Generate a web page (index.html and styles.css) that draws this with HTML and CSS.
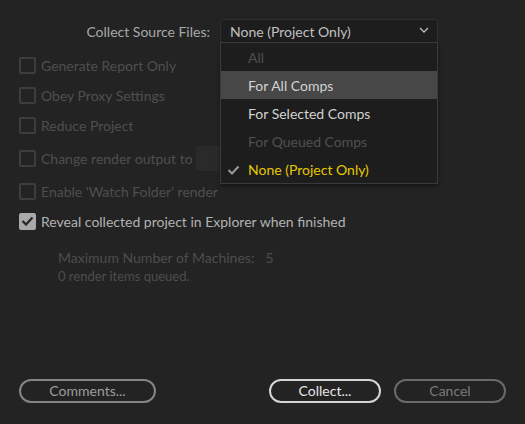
FILE: index.html
```html
<!DOCTYPE html>
<html>
<head>
<meta charset="utf-8">
<link rel="stylesheet" href="styles.css">
</head>
<body>
<div class="dialog">
  <div class="top-row">
    <span class="top-label">Collect Source Files:</span>
    <div class="select">
      <span class="select-value">None (Project Only)</span>
      <svg class="chevron" width="10" height="6" viewBox="0 0 10 6"><path d="M1 1 L5 5 L9 1" fill="none" stroke="#bdbdbd" stroke-width="1.3"/></svg>
      <ul class="menu">
        <li class="item disabled">All</li>
        <li class="item hover">For All Comps</li>
        <li class="item">For Selected Comps</li>
        <li class="item disabled">For Queued Comps</li>
        <li class="item selected"><svg class="tick" width="13" height="10" viewBox="0 0 13 10"><path d="M1.5 5 L5 8.5 L11.5 1.5" fill="none" stroke="#9a9a9a" stroke-width="2"/></svg>None (Project Only)</li>
      </ul>
    </div>
  </div>

  <div class="options">
    <div class="row disabled"><span class="box"></span><span>Generate Report Only</span></div>
    <div class="row disabled"><span class="box"></span><span>Obey Proxy Settings</span></div>
    <div class="row disabled"><span class="box"></span><span>Reduce Project</span></div>
    <div class="row disabled tall"><span class="box"></span><span>Change render output to</span><span class="field"></span></div>
    <div class="row disabled"><span class="box"></span><span>Enable 'Watch Folder' render</span></div>
    <div class="row"><span class="box checked"><svg width="13" height="10" viewBox="0 0 13 10"><path d="M1.5 5 L5 8.5 L11.5 1.5" fill="none" stroke="#262626" stroke-width="2.2"/></svg></span><span>Reveal collected project in Explorer when finished</span></div>
  </div>

  <div class="info">
    <div class="machines"><span>Maximum Number of Machines:</span><span class="num">5</span></div>
    <div class="queued">0 render items queued.</div>
  </div>

  <div class="buttons">
    <button class="btn comments">Comments...</button>
    <div class="right-btns">
      <button class="btn collect">Collect...</button>
      <button class="btn cancel">Cancel</button>
    </div>
  </div>
</div>
</body>
</html>
```

FILE: styles.css
```css
* { box-sizing: border-box; }
html, body {
  margin: 0;
  padding: 0;
  background: #232323;
}
body {
  width: 525px;
  height: 424px;
  overflow: hidden;
  font-family: "Lato", "Liberation Sans", sans-serif;
  font-size: 14px;
  color: #b0b0b0;
}
.dialog {
  display: flex;
  flex-direction: column;
  height: 424px;
  padding: 19px 19px 21px 19px;
}
.top-row {
  display: flex;
  align-items: center;
  height: 24px;
  position: relative;
  z-index: 2;
}
.top-label {
  width: 201px;
  text-align: right;
  padding-right: 10px;
  color: #a8a8a8;
}
.select {
  position: relative;
  width: 218px;
  height: 24px;
  background: #1d1d1d;
  border: 1px solid #2f2f2f;
  border-radius: 3px;
  display: flex;
  align-items: center;
  padding-left: 9px;
  color: #c0c0c0;
}
.select-value { flex: 1; }
.chevron { margin-right: 8px; margin-top: -2px; }
.menu {
  position: absolute;
  left: -1px;
  top: 22px;
  width: 218px;
  margin: 0;
  padding: 0;
  list-style: none;
  background: #1d1d1d;
  border: 1px solid #3b3b3b;
  box-shadow: 0 2px 4px rgba(0,0,0,0.4);
}
.item {
  height: 28px;
  display: flex;
  align-items: center;
  padding-left: 27px;
  color: #d2d2d2;
  position: relative;
}
.item.disabled { color: #505050; }
.item.hover { background: #474747; }
.item.selected { color: #e6c800; }
.tick { position: absolute; left: 6px; top: 10px; }

.options {
  display: flex;
  flex-direction: column;
  margin-top: 7px;
}
.row {
  display: flex;
  align-items: center;
  height: 30px;
  gap: 5px;
  color: #b2b2b2;
}
.row.tall { height: 36px; }
.row.disabled { color: #4f4f4f; }
.box {
  width: 17px;
  height: 17px;
  border: 2px solid #3d3d3d;
  border-radius: 2px;
  flex: none;
  display: flex;
  align-items: center;
  justify-content: center;
}
.box.checked {
  background: #a9a9a9;
  border-color: #a9a9a9;
}
.field {
  width: 110px;
  height: 25px;
  background: #2a2a2a;
  border-radius: 3px;
  margin-left: -2px;
}
.info {
  margin-top: 11px;
  padding-left: 39px;
  color: #4d4d4d;
}
.machines {
  display: flex;
  gap: 11px;
  height: 20px;
  align-items: center;
}
.queued {
  font-size: 13px;
  height: 18px;
  display: flex;
  align-items: center;
}
.buttons {
  margin-top: auto;
  display: flex;
  justify-content: space-between;
  align-items: center;
}
.right-btns {
  display: flex;
  gap: 13px;
}
.btn {
  height: 24px;
  border-radius: 12px;
  background: transparent;
  font-family: inherit;
  font-size: 14px;
  padding: 0;
  line-height: 18px;
}
.comments {
  width: 137px;
  border: 2px solid #858585;
  color: #9d9d9d;
}
.collect {
  width: 112px;
  border: 2px solid #d4d4d4;
  color: #e6e6e6;
}
.cancel {
  width: 112px;
  border: 2px solid #6a6a6a;
  color: #7a7a7a;
}
```
